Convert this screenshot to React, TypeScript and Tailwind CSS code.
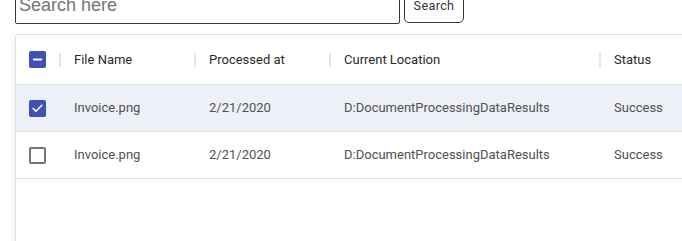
import { Check, Minus } from "lucide-react";

const rows = [
  { name: "Invoice.png", date: "2/21/2020", location: "D:DocumentProcessingDataResults", status: "Success", selected: true },
  { name: "Invoice.png", date: "2/21/2020", location: "D:DocumentProcessingDataResults", status: "Success", selected: false },
];

const cols = "grid grid-cols-[43px_135px_135px_270px_1fr]";

function Box({ state }: { state: "on" | "off" | "some" }) {
  if (state === "off") {
    return <div className="w-[17px] h-[17px] rounded-[2px] border-2 border-[#757575] bg-white" />;
  }
  return (
    <div className="w-[17px] h-[17px] rounded-[2px] bg-[#3f51b5] flex items-center justify-center text-white">
      {state === "on" ? <Check size={13} strokeWidth={3} /> : <Minus size={13} strokeWidth={3.5} />}
    </div>
  );
}

function HeadCell({ label }: { label: string }) {
  return (
    <div className="flex items-center">
      <span className="w-[2px] h-[14px] bg-[#e6e6e6]" />
      <span className="ml-[13px]">{label}</span>
    </div>
  );
}

export default function App() {
  return (
    <div className="w-full h-[241px] overflow-hidden bg-white pl-[15px] font-['Roboto',sans-serif]">
      <div className="flex items-end gap-[4px] -mt-[12px]">
        <div className="w-[385px] h-[36px] border border-[#3a3a3a] rounded-[2px] flex items-center pl-[3px] pb-[2px] font-['Liberation_Sans',Arial,sans-serif] text-[18px] text-[#757575]">
          Search here
        </div>
        <button className="w-[60px] h-[35px] mb-[1px] border border-[#3a3a3a] rounded-[5px] bg-white text-[12.5px] tracking-[0.4px] text-[#333] flex items-center justify-center pt-[1px]">
          Search
        </button>
      </div>

      <div className="mt-[10px] w-[720px] h-[220px] border border-[#e0e0e0] rounded-[3px] bg-white text-[13px] shadow-[-3px_0_6px_rgba(0,0,0,0.04)]">
        <div className={`${cols} h-[50px] border-b border-[#e0e0e0] text-[#2a2a2a]`}>
          <div className="flex items-center pl-[13px]">
            <Box state="some" />
          </div>
          <HeadCell label="File Name" />
          <HeadCell label="Processed at" />
          <HeadCell label="Current Location" />
          <HeadCell label="Status" />
        </div>
        {rows.map((r, i) => (
          <div
            key={i}
            className={`${cols} h-[47px] border-b border-[#e0e0e0] text-[#505050] ${r.selected ? "bg-[#eef0f8]" : "bg-white"}`}
          >
            <div className="flex items-center pl-[13px]">
              <Box state={r.selected ? "on" : "off"} />
            </div>
            <div className="flex items-center pl-[15px]">{r.name}</div>
            <div className="flex items-center pl-[15px]">{r.date}</div>
            <div className="flex items-center pl-[15px]">{r.location}</div>
            <div className="flex items-center pl-[15px]">{r.status}</div>
          </div>
        ))}
      </div>
    </div>
  );
}
